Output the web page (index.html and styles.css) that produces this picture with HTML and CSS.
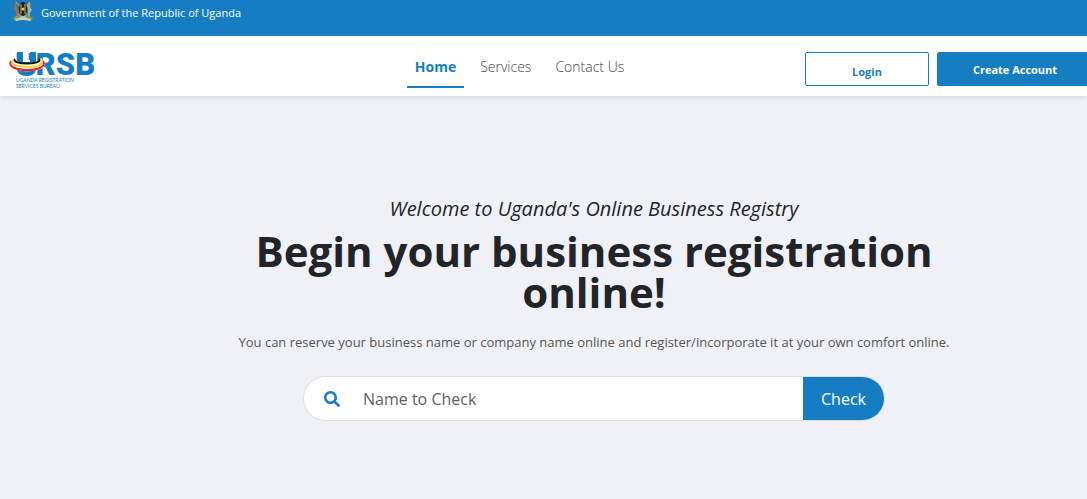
FILE: index.html
```
<!DOCTYPE html>
<html lang="en">
<head>
    <meta charset="UTF-8">
    <meta name="viewport" content="width=device-width, initial-scale=1.0">
    <title>Online Business Registry</title>
    <link rel="stylesheet" href="styles.css">
</head>
<body>
    <div class="top-bar">
        <svg class="crest" viewBox="0 0 22 22" aria-hidden="true">
            <path d="M3 1 L5 3 L5 8 L7 11 L6 18 L4 18 L4 12 L2 8 L3 5 Z" fill="#b5643c"/>
            <path d="M17 2 L19 4 L18 7 L20 10 L18 13 L18 18 L16 18 L16 9 L15 6 Z" fill="#a9a9a0"/>
            <path d="M18 3 l2 -1 l-1 3 z" fill="#c8402f"/>
            <path d="M4 2 L17 17 M18 2 L5 17" stroke="#c9b26b" stroke-width="1"/>
            <path d="M1 18 Q11 10 21 18 L19 21 Q11 18 3 21 Z" fill="#7d9a62"/>
            <path d="M9 15 h4 l1 4 h-6 z" fill="#9ec4d8"/>
            <path d="M3 19 Q11 16 19 19 L18 21 Q11 19 4 21 Z" fill="#d8cf9a"/>
            <ellipse cx="11" cy="9" rx="4" ry="7" fill="#1c1a1a"/>
            <path d="M9 4 v10 M13 4 v10" stroke="#e0b92e" stroke-width="1"/>
            <circle cx="11" cy="9" r="1.5" fill="#f1cf38"/>
        </svg>
        <span>Government of the Republic of Uganda</span>
    </div>

    <header class="header">
        <a href="#" class="logo" aria-label="URSB home">
            <svg viewBox="0 0 96 44">
                <text class="logo-name" x="7" y="25">URSB</text>
                <path d="M2 11 C-4 25 44 25 36 11 L28 11 L28 2 L22 2 L22 10 L15 10 L15 2 L9 2 L9 10 Z" fill="#fff"/>
                <path d="M9 2 h6 v10 h7 v-10 h6 v11 q-9 4 -19 0 z" fill="#167dc2"/>
                <path d="M9 20 q10 3 19 0 q-2 6 -9 6 q-8 0 -10 -6 z" fill="#167dc2"/>
                <path d="M6 9 C2 17 37 17 32 9" fill="none" stroke="#fff" stroke-width="4"/>
                <path d="M3 11 C-4 23 43 23 35 11" fill="none" stroke="#e5202b" stroke-width="2"/>
                <path d="M5 10 C-2 19 41 19 33 10" fill="none" stroke="#fbd31b" stroke-width="2"/>
                <path d="M7 9 C2 15 36 15 31 9" fill="none" stroke="#111" stroke-width="2"/>
                <text class="logo-sub" x="8" y="32">UGANDA REGISTRATION</text>
                <text class="logo-sub" x="8" y="38">SERVICES BUREAU</text>
            </svg>
        </a>
        <nav class="nav">
            <a href="#" class="nav-link active">Home</a>
            <a href="#" class="nav-link">Services</a>
            <a href="#" class="nav-link">Contact Us</a>
        </nav>
        <div class="actions">
            <button type="button" class="button login">Login</button>
            <button type="button" class="button create">Create Account</button>
        </div>
    </header>

    <main class="hero">
        <p class="welcome">Welcome to Uganda's Online Business Registry</p>
        <h1>Begin your business registration online!</h1>
        <p class="intro">You can reserve your business name or company name online and register/incorporate it at your own comfort online.</p>
        <form class="search">
            <label for="name">
                <svg class="search-icon" viewBox="0 0 512 512" role="img" aria-label="Search name">
                    <path fill="currentColor" d="M505 442.700 405.300 343c-4.500-4.500-10.600-7-17-7H372c27.600-35.300 44-79.700 44-128C416 93.100 322.900 0 208 0S0 93.100 0 208s93.100 208 208 208c48.300 0 92.700-16.400 128-44v16.300c0 6.400 2.500 12.500 7 17l99.700 99.700c9.400 9.400 24.600 9.400 33.900 0l28.300-28.300c9.400-9.400 9.400-24.600.1-34zM208 336c-70.700 0-128-57.200-128-128 0-70.700 57.200-128 128-128 70.700 0 128 57.200 128 128 0 70.700-57.200 128-128 128z"/>
                </svg>
            </label>
            <input type="text" id="name" placeholder="Name to Check">
            <button type="button" class="check">Check</button>
        </form>
    </main>
</body>
</html>
```

FILE: styles.css
```
* {
    box-sizing: border-box;
}
body {
    margin: 0;
    min-height: 100vh;
    background: #f0f1f6;
    color: #212529;
    font-family: "Segoe UI", "Open Sans", "Noto Sans", sans-serif;
    overflow-x: hidden;
}
.top-bar {
    display: flex;
    align-items: flex-start;
    gap: 7px;
    height: 36px;
    padding-left: 12px;
    background: #167dc2;
    color: #fff;
    font-size: 11px;
    line-height: 26px;
}
.crest {
    width: 22px;
    height: 22px;
}
.header {
    display: grid;
    grid-template-columns: 1fr auto 1fr;
    height: 60px;
    padding-left: 8px;
    background: #fff;
    box-shadow: 0 3px 4px rgba(0, 0, 0, 0.08);
}
.logo {
    padding-top: 14px;
}
.logo svg {
    display: block;
    width: 96px;
    height: 44px;
    overflow: visible;
}
.logo-name {
    font-family: Roboto, sans-serif;
    font-size: 31px;
    font-weight: 900;
    fill: #167dc2;
}
.logo-sub {
    font-family: Lato, sans-serif;
    font-size: 5px;
    fill: #167dc2;
}
.nav {
    display: flex;
    gap: 8px;
    margin-right: 56px;
    padding-top: 12px;
}
.nav-link {
    height: 40px;
    padding: 0 8px;
    color: #444;
    font-size: 14px;
    font-weight: 300;
    line-height: 38px;
    text-decoration: none;
}
.nav-link.active {
    border-bottom: 2px solid #167dc2;
    color: #167dc2;
    font-weight: 700;
}
.actions {
    display: flex;
    justify-content: flex-end;
    gap: 8px;
    margin-right: -6px;
    padding-top: 16px;
}
.button {
    height: 34px;
    border: 1px solid #167dc2;
    border-radius: 2px;
    font-family: inherit;
    font-size: 11px;
    font-weight: 700;
    cursor: pointer;
}
.login {
    width: 124px;
    padding-top: 6px;
    background: #fff;
    color: #167dc2;
}
.create {
    width: 156px;
    background: #167dc2;
    color: #fff;
}
.hero {
    display: flex;
    flex-direction: column;
    align-items: center;
    padding: 98px 0 78px 101px;
    text-align: center;
}
.welcome {
    margin: 0 0 6px;
    font-size: 20px;
    font-style: italic;
    line-height: 30px;
}
h1 {
    max-width: 760px;
    margin: 0 0 20px;
    font-size: 42px;
    font-weight: 700;
    line-height: 41px;
}
.intro {
    margin: 0 0 24px;
    color: #555;
    font-size: 13px;
    line-height: 20px;
}
.search {
    display: flex;
    width: 60%;
    max-width: 582px;
    height: 45px;
    border: 1px solid #ddd;
    border-radius: 23px;
    background: #fff;
    overflow: hidden;
}
.search label {
    display: flex;
    align-items: center;
    padding: 0 23px 0 20px;
    color: #167dc2;
}
.search-icon {
    width: 16px;
    height: 16px;
}
.search input {
    flex: 1;
    min-width: 0;
    padding: 0;
    border: 0;
    outline: 0;
    background: transparent;
    font-family: inherit;
    font-size: 16px;
}
.search input::placeholder {
    color: #5c6166;
}
.check {
    width: 81px;
    border: 0;
    background: #167dc2;
    color: #fff;
    font-family: inherit;
    font-size: 16px;
    cursor: pointer;
}
```
